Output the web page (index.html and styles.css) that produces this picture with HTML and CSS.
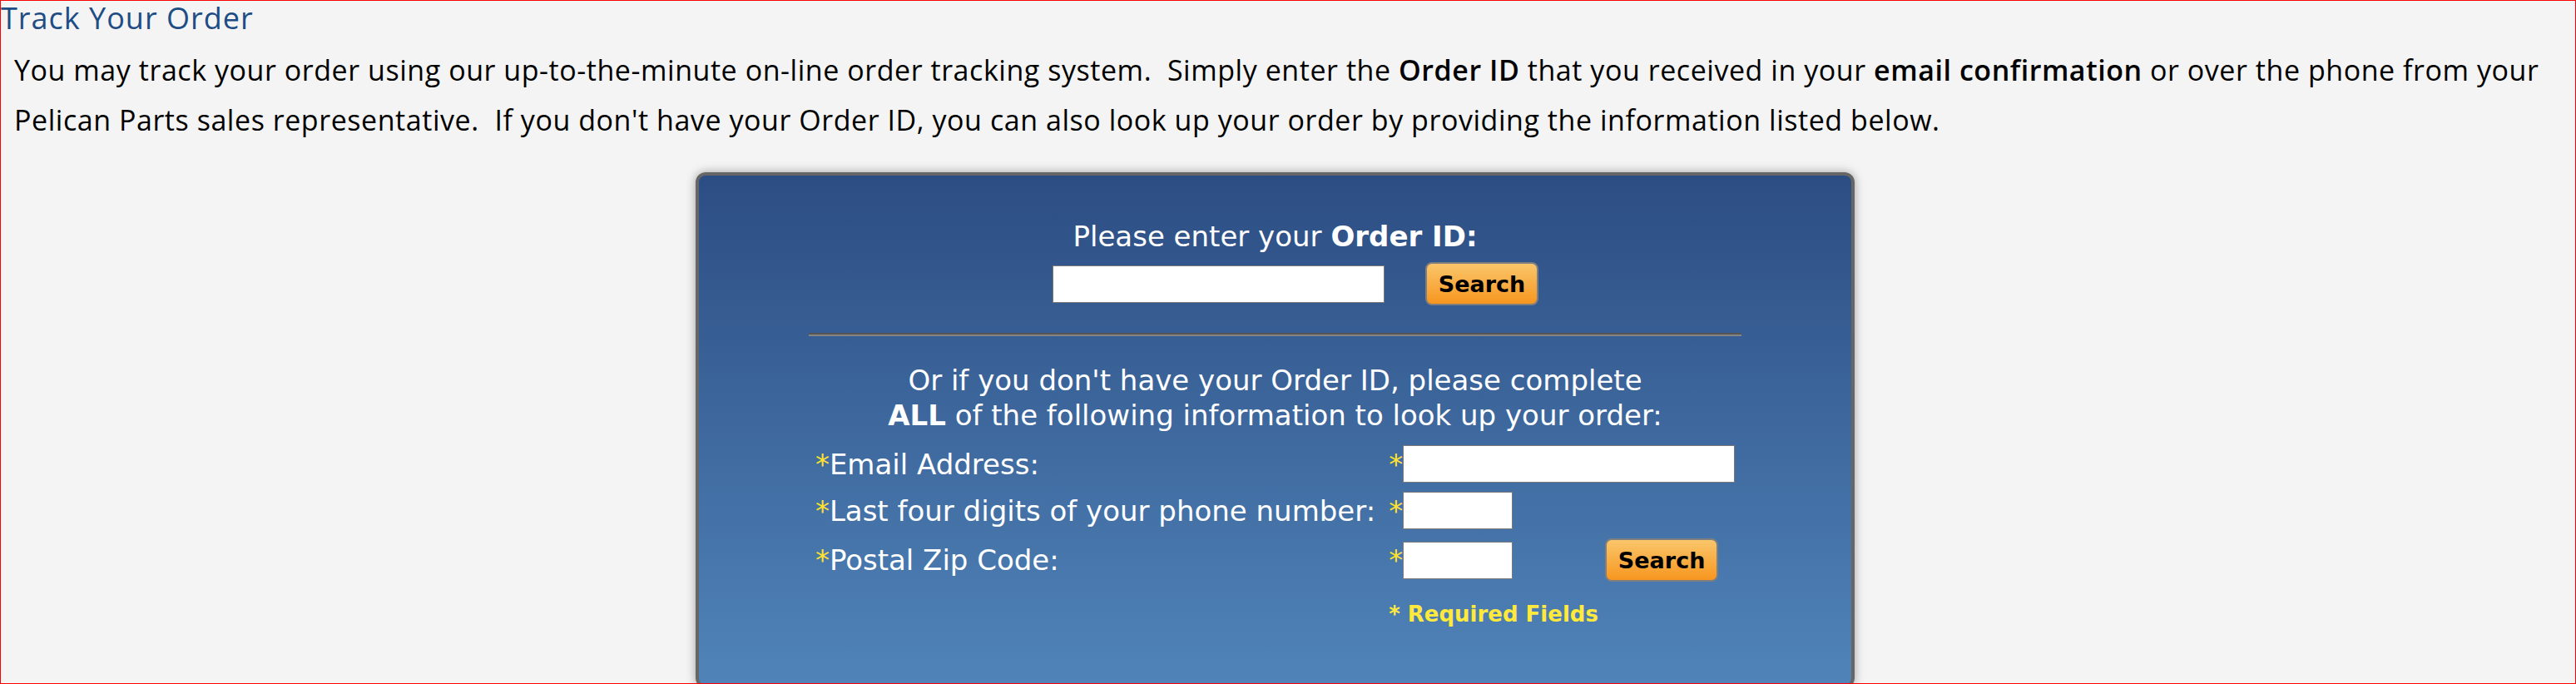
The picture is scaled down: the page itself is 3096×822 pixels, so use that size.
FILE: index.html
```html
<!DOCTYPE html>
<html lang="en">

<head>
    <meta charset="UTF-8">
    <meta name="viewport" content="width=device-width, initial-scale=1.0">
    <title>Track Your Order</title>
    <link rel="stylesheet" href="styles.css">
</head>

<body>
    <div class="page">
        <h1 class="title">Track Your Order</h1>
        <div class="content">
            <p class="intro">You may track your order using our up-to-the-minute on-line order tracking system.&nbsp; Simply enter the <b>Order ID</b> that you received in your <b>email confirmation</b> or over the phone from your Pelican Parts sales representative.&nbsp; If you don't have your Order ID, you can also look up your order by providing the information listed below.</p>

            <form class="track-box" action="#">
                <div class="ask">Please enter your <b>Order ID:</b></div>
                <div class="id-row">
                    <input type="text" class="field field-long">
                    <button type="button" class="btn-search">Search</button>
                </div>

                <hr class="split">

                <div class="ask ask-alt">Or if you don't have your Order ID, please complete<br><b>ALL</b> of the following information to look up your order:</div>

                <div class="lookup">
                    <label class="lbl"><span class="req">*</span>Email Address:</label>
                    <div class="cell"><span class="req">*</span><input type="text" class="field field-long"></div>

                    <label class="lbl"><span class="req">*</span>Last four digits of your phone number:</label>
                    <div class="cell"><span class="req">*</span><input type="text" class="field field-short"></div>

                    <label class="lbl"><span class="req">*</span>Postal Zip Code:</label>
                    <div class="cell"><span class="req">*</span><input type="text" class="field field-short"><button type="button" class="btn-search btn-gap">Search</button></div>

                    <div class="note">* Required Fields</div>
                </div>
            </form>
        </div>
    </div>
</body>

</html>
```

FILE: styles.css
```css
* {
    margin: 0;
    padding: 0;
    box-sizing: border-box;
}

body {
    background-color: #f4f4f4;
}

.page {
    height: 822px;
    border: 1px solid #f00;
    overflow: hidden;
    font-family: "Open Sans", "Noto Sans", sans-serif;
    color: #000;
}

.title {
    padding-top: 1px;
    font-size: 36px;
    line-height: 40px;
    font-weight: normal;
    letter-spacing: 1px;
    color: #1d4d84;
}

.content {
    padding-right: 31px;
}

.intro {
    margin-top: 12px;
    padding-left: 16px;
    font-size: 34px;
    line-height: 60px;
    letter-spacing: 0.55px;
}

.intro b {
    font-weight: 600;
}

/* blue lookup panel */
.track-box {
    width: 1393px;
    height: 620px;
    margin: 33px auto 0;
    padding-top: 53px;
    border: 4px solid #666;
    border-radius: 12px;
    background: linear-gradient(#2c4d83, #5084b9);
    box-shadow: 0 0 12px rgba(0, 0, 0, .35);
    font-family: "DejaVu Sans", Verdana, sans-serif;
    font-size: 34px;
    color: #fff;
}

.ask {
    text-align: center;
}

.ask-alt {
    line-height: 42px;
}

.id-row {
    display: flex;
    justify-content: center;
    align-items: center;
    gap: 49px;
    margin-top: 11px;
    padding-left: 49px;
}

.field {
    height: 45px;
    border: 1px solid #7a7a7a;
    background-color: #fff;
}

.field-long {
    width: 399px;
}

.field-short {
    width: 132px;
}

.btn-search {
    width: 136px;
    height: 52px;
    border: 2px solid #7f7f7f;
    border-radius: 8px;
    background: linear-gradient(#fac66b, #f7961f);
    font-family: "DejaVu Sans", Verdana, sans-serif;
    font-weight: bold;
    font-size: 27px;
    color: #000;
}

.btn-gap {
    margin-left: 111px;
}

.split {
    width: 81%;
    margin: 33px auto 32px;
    border: 0;
    border-top: 2px solid #555;
    border-bottom: 2px solid #858585;
}

.lookup {
    display: grid;
    grid-template-columns: auto auto;
    justify-content: center;
    align-items: center;
    column-gap: 16px;
    row-gap: 11px;
    margin-top: 15px;
}

.lbl {
    line-height: 42px;
}

.cell {
    display: flex;
    align-items: center;
}

.req {
    display: inline-block;
    width: 17px;
    color: #ffe22e;
}

.note {
    grid-column: 2;
    margin-top: 13px;
    font-size: 26px;
    font-weight: bold;
    color: #ffe93d;
}
```
